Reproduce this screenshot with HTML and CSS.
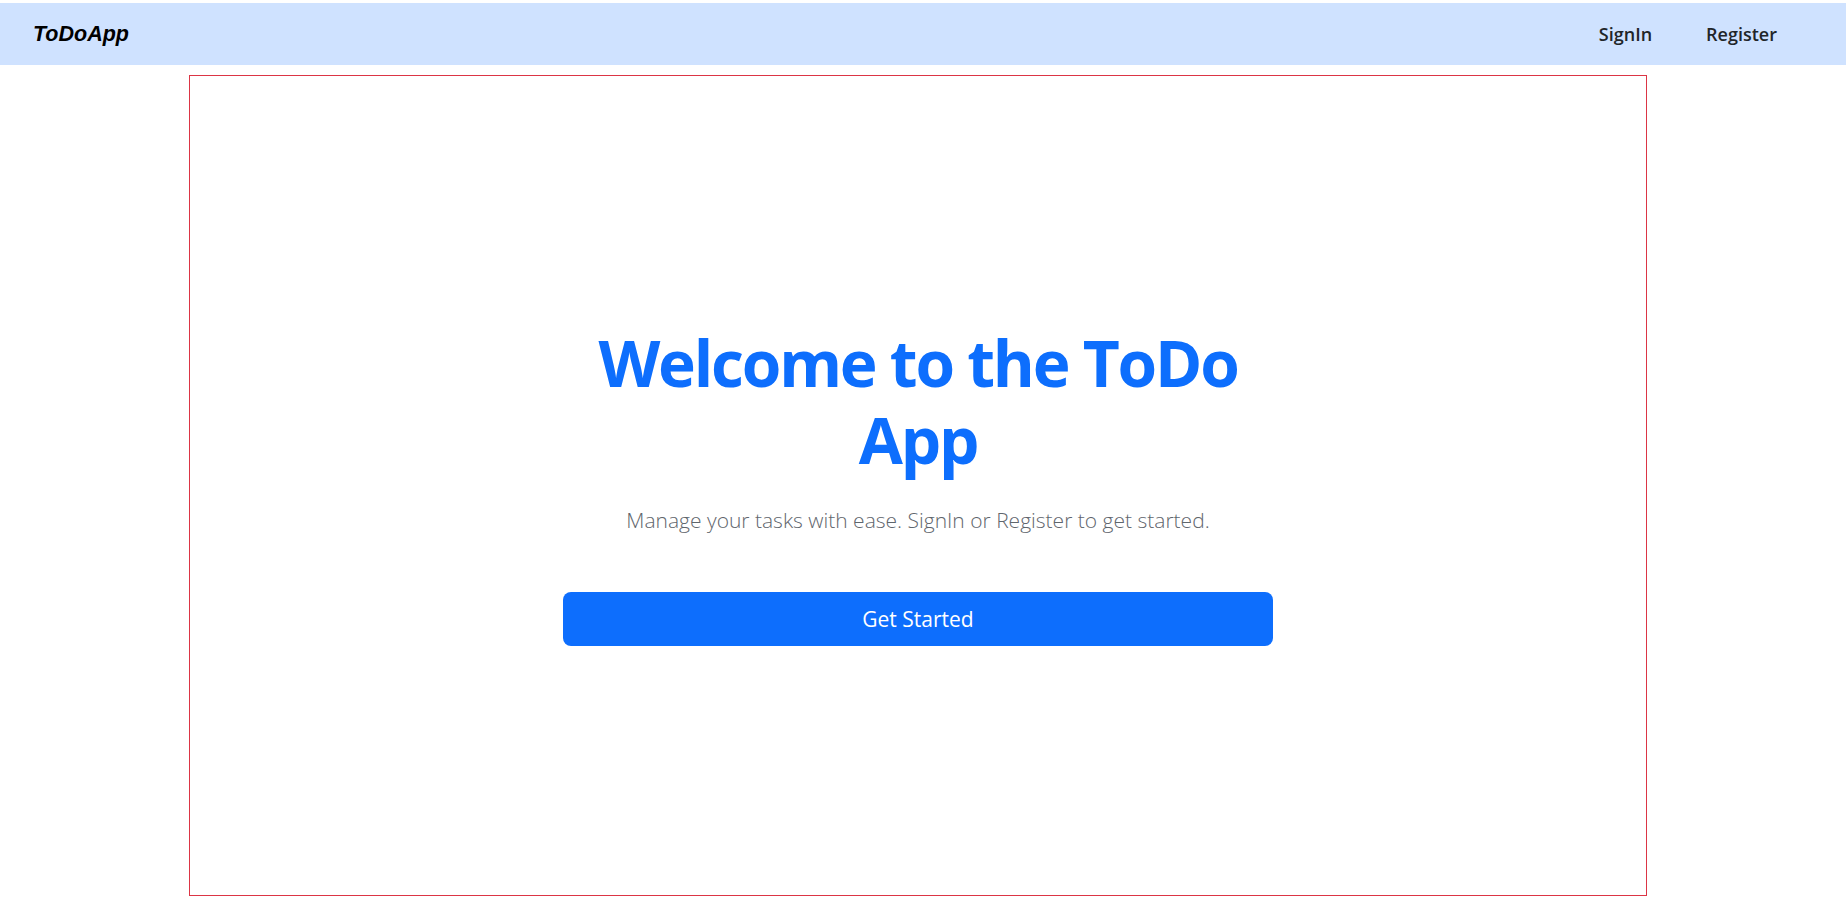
FILE: index.html
```html
<!DOCTYPE html>
<html lang="en">
<head>
<meta charset="utf-8">
<title>ToDoApp</title>
<link rel="stylesheet" href="styles.css">
</head>
<body>
<nav class="navbar">
  <a class="brand" href="#">ToDoApp</a>
  <div class="nav-links">
    <a class="nav-link" href="#">SignIn</a>
    <a class="nav-link" href="#">Register</a>
  </div>
</nav>
<main class="frame">
  <section class="hero">
    <h1 class="hero-title">Welcome to the ToDo<br>App</h1>
    <p class="hero-lead">Manage your tasks with ease. SignIn or Register to get started.</p>
    <a class="hero-btn" href="#">Get Started</a>
  </section>
</main>
</body>
</html>
```
FILE: styles.css
```css
html, body {
  margin: 0;
  padding: 0;
  background: #fff;
}
body {
  padding-top: 3px;
  font-family: "Open Sans", "Noto Sans", sans-serif;
  color: #212529;
}
a { text-decoration: none; }

.navbar {
  height: 62px;
  background: #cfe2ff;
  display: flex;
  align-items: center;
  justify-content: space-between;
  padding: 0 69px 0 33px;
}
.brand {
  font-family: "Liberation Sans", Arial, sans-serif;
  font-weight: 700;
  font-style: italic;
  font-size: 21.5px;
  color: #000;
}
.nav-links {
  display: flex;
  gap: 54px;
}
.nav-link {
  font-size: 18px;
  font-weight: 600;
  color: #212529;
}

.frame {
  margin: 10px 0 0 189px;
  width: 1456px;
  height: 819px;
  border: 1px solid #dc3545;
  display: flex;
  align-items: center;
  justify-content: center;
}
.hero {
  width: 710px;
  display: flex;
  flex-direction: column;
  align-items: center;
  text-align: center;
}
.hero-title {
  margin: 0 0 26px;
  font-size: 64px;
  line-height: 1.2;
  font-weight: 700;
  letter-spacing: -2.2px;
  color: #0d6efd;
}
.hero-lead {
  margin: 0;
  font-size: 21px;
  line-height: 1.5;
  font-weight: 300;
  color: #5f666d;
}
.hero-btn {
  margin-top: 55px;
  width: 100%;
  height: 54px;
  box-sizing: border-box;
  display: flex;
  align-items: center;
  justify-content: center;
  background: #0d6efd;
  color: #fff;
  border-radius: 8px;
  font-size: 21px;
}
```
